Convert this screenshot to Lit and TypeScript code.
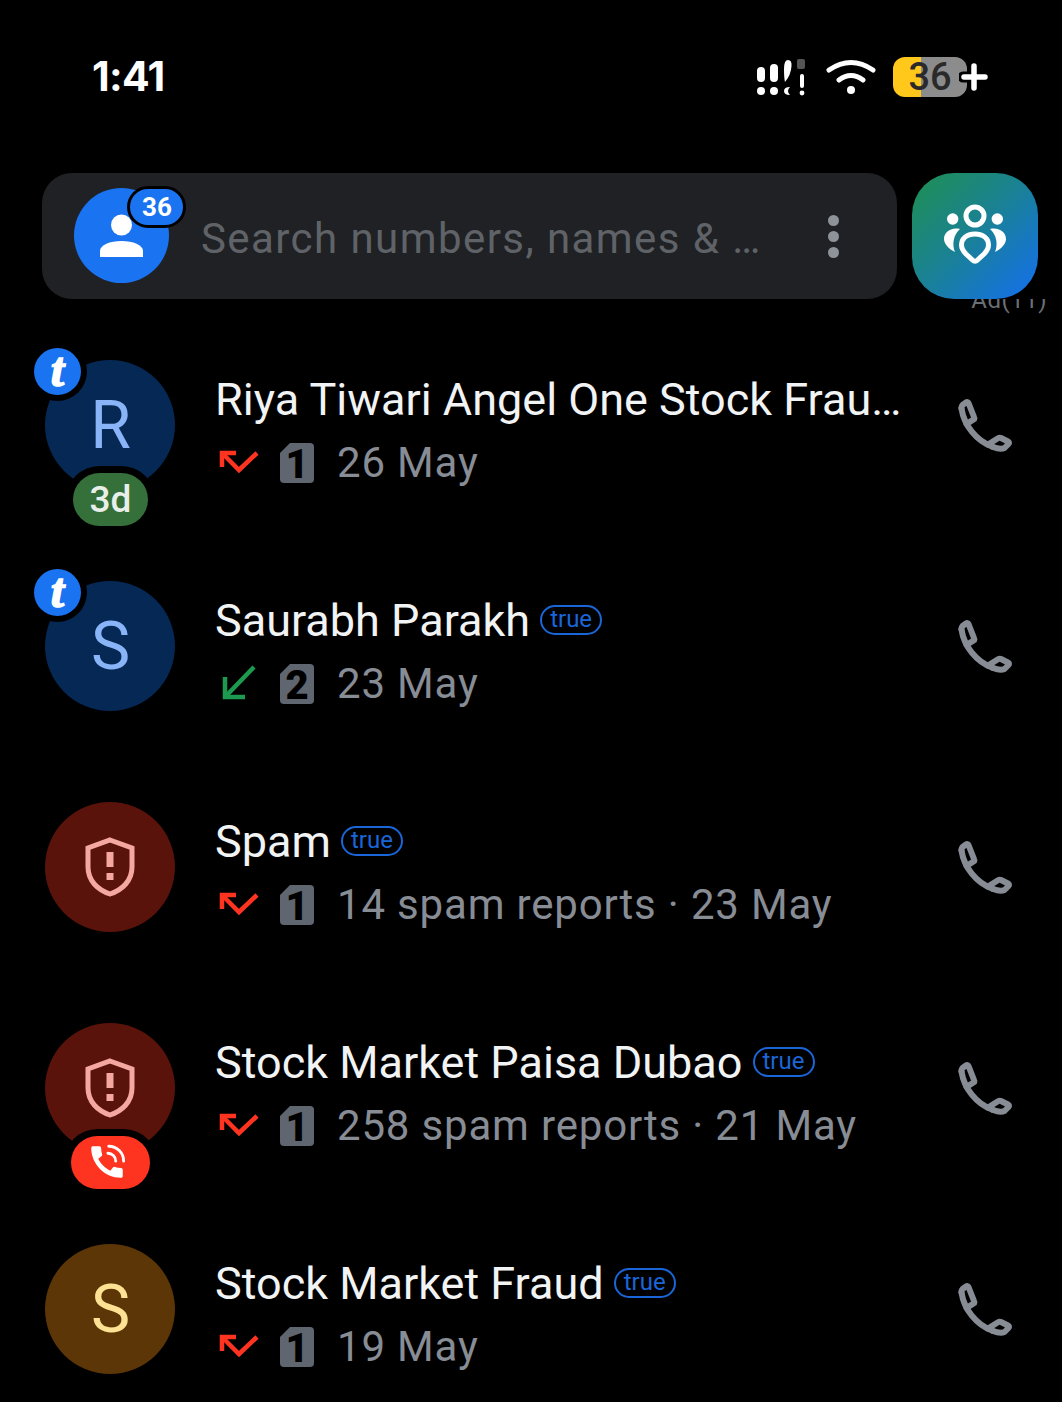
import { LitElement, html, css, svg, nothing } from "lit";
import { customElement } from "lit/decorators.js";

type Call = "missed" | "received";
interface Row {
  name: string;
  sub: string;
  call: Call;
  sim: number;
  tone: "blue" | "spam" | "brown";
  letter?: string;
  brand?: boolean;
  tag?: boolean;
  age?: string;
  live?: boolean;
}

const ROWS: Row[] = [
  { name: "Riya Tiwari Angel One Stock Frau…", sub: "26 May", call: "missed", sim: 1, tone: "blue", letter: "R", brand: true, age: "3d" },
  { name: "Saurabh Parakh", sub: "23 May", call: "received", sim: 2, tone: "blue", letter: "S", brand: true, tag: true },
  { name: "Spam", sub: "14 spam reports · 23 May", call: "missed", sim: 1, tone: "spam", tag: true },
  { name: "Stock Market Paisa Dubao", sub: "258 spam reports · 21 May", call: "missed", sim: 1, tone: "spam", tag: true, live: true },
  { name: "Stock Market Fraud", sub: "19 May", call: "missed", sim: 1, tone: "brown", letter: "S", tag: true },
];

// handle, then the two ear pieces that sit on it
const phoneIcon = svg`
  <path d="M3.5 9.5 C6 26 18 42 35 48" />
  <path d="M3.5 9.5 C3.3 8 3.5 7 4.5 6 L8 3.5 C9 2.8 10 3 10.5 4 L16 18 C16.5 19 16.3 20 15.5 20.5 L8.5 25" />
  <path d="M35 48 C39 49.5 44 50 46.5 49 L50.5 45 C51.5 44 51 43 50 42.5 L43 39 C42 38.5 41 38.7 40 39.3 L30 45.5" />
`;

@customElement("app-root")
export class AppRoot extends LitElement {
  static styles = css`
    :host {
      display: block;
      width: 1062px;
      height: 1402px;
      overflow: hidden;
      background: #000;
      font-family: Roboto, "Liberation Sans", sans-serif;
    }

    /* Status bar */
    .status {
      height: 154px;
      display: flex;
      align-items: center;
      justify-content: space-between;
      padding: 0 74px 0 92px;
      box-sizing: border-box;
    }
    .clock {
      font-family: Inter, Roboto, sans-serif;
      font-size: 41px;
      font-weight: 700;
      color: #fff;
      letter-spacing: -0.7px;
      margin-bottom: 2px;
    }
    .status-icons {
      display: flex;
      align-items: center;
      gap: 17px;
    }
    .status-icons svg { display: block; }
    .signal { margin-right: 2px; }
    .battery {
      position: relative;
      width: 74px;
      height: 40px;
      border-radius: 12px;
      background: linear-gradient(90deg, #ffc81a 0 28px, #8c8c8c 28px);
      color: #2a2a2a;
      font-size: 38px;
      font-weight: 500;
      line-height: 40px;
      text-align: center;
      margin-right: 21px;
    }
    .battery svg {
      position: absolute;
      left: 66px;
      top: 3px;
    }

    /* Search */
    .top {
      position: relative;
      display: flex;
      gap: 15px;
      margin-top: 19px;
      padding: 0 24px 0 42px;
    }
    .search {
      flex: 1;
      height: 126px;
      display: flex;
      align-items: center;
      background: #202124;
      border-radius: 30px;
      padding-left: 32px;
      box-sizing: border-box;
    }
    .me {
      position: relative;
      width: 95px;
      height: 95px;
      margin-top: -2px;
      border-radius: 50%;
      background: #1a73f0;
      flex: none;
    }
    .me svg {
      position: absolute;
      left: 0;
      top: 0;
    }
    .count {
      position: absolute;
      left: 53px;
      top: -2px;
      width: 59px;
      height: 42px;
      box-sizing: border-box;
      border: 3px solid #000;
      border-radius: 21px;
      background: #1a73f0;
      color: #fff;
      font-size: 26px;
      font-weight: 700;
      line-height: 37px;
      text-align: center;
      padding-left: 1px;
    }
    .placeholder {
      margin-left: 32px;
      padding-top: 4px;
      flex: 1;
      font-size: 42px;
      letter-spacing: 1.43px;
      color: #5f6368;
      white-space: nowrap;
    }
    .dots {
      display: flex;
      flex-direction: column;
      gap: 5px;
      margin-right: 58px;
    }
    .dots i {
      width: 11px;
      height: 11px;
      border-radius: 50%;
      background: #8e9299;
    }
    .assistant {
      position: relative;
      z-index: 1;
      width: 126px;
      height: 126px;
      flex: none;
      border-radius: 42px;
      background: linear-gradient(135deg, #1f9050 0%, #1a8290 45%, #146ff0 100%);
      display: flex;
      align-items: center;
      justify-content: center;
    }
    /* the ad label sits clipped under the button, only its lower part shows */
    .ad {
      position: absolute;
      right: 15px;
      top: 126px;
      height: 18px;
      overflow: hidden;
      font-size: 24px;
      letter-spacing: 0.5px;
      color: #6a6f75;
    }
    .ad span {
      display: block;
      margin-top: -13px;
    }

    /* Call log */
    .list {
      margin-top: 15px;
    }
    .row {
      height: 221px;
      display: flex;
      align-items: center;
      padding: 0 48px 0 45px;
      box-sizing: border-box;
    }
    .avatar {
      position: relative;
      width: 130px;
      height: 130px;
      flex: none;
      box-sizing: border-box;
      padding: 1px 0 0 1px;
      border-radius: 50%;
      display: flex;
      align-items: center;
      justify-content: center;
      font-size: 66px;
      font-weight: 400;
    }
    .avatar.blue { background: #052855; color: #8ab4f8; }
    .avatar.spam { background: #5a130b; padding: 0; }
    .avatar.brown { background: #5c3606; color: #fde293; }
    .brand {
      position: absolute;
      left: -11px;
      top: -12px;
      width: 47px;
      height: 47px;
      border-radius: 50%;
      background: #1a73f0;
      box-shadow: 0 0 0 6px #000;
      color: #fff;
      font-family: "Liberation Serif", serif;
      font-style: italic;
      font-weight: 700;
      font-size: 48px;
      line-height: 44px;
      text-align: center;
      -webkit-text-stroke: 1.5px #fff;
    }
    .pill {
      position: absolute;
      top: 113px;
      height: 53px;
      border-radius: 27px;
      box-shadow: 0 0 0 7px #000;
      display: flex;
      align-items: center;
      justify-content: center;
    }
    .age {
      left: 28px;
      width: 75px;
      background: #35703a;
      color: #e8efe8;
      font-size: 37px;
      font-weight: 500;
    }
    .live {
      left: 26px;
      width: 79px;
      background: #ff3420;
    }
    .live svg { margin-right: 8px; }
    .info {
      flex: 1;
      min-width: 0;
      margin-left: 40px;
      padding-top: 13px;
      display: flex;
      flex-direction: column;
      gap: 9px;
    }
    .title {
      display: flex;
      align-items: center;
      height: 54px;
      min-width: 0;
      gap: 10px;
    }
    .name {
      font-size: 45px;
      color: #f1f3f4;
      white-space: nowrap;
    }
    .tag {
      flex: none;
      box-sizing: border-box;
      width: 62px;
      height: 30px;
      margin-top: -2px;
      border: 2px solid #1a66d8;
      border-radius: 15px;
      color: #1a66d8;
      font-size: 24px;
      line-height: 25px;
      text-align: center;
    }
    .detail {
      display: flex;
      align-items: center;
      height: 54px;
      padding-left: 4px;
    }
    .detail svg { display: block; flex: none; }
    .sim {
      margin-left: 21px;
      overflow: visible;
    }
    .sub {
      margin-left: 23px;
      font-size: 42px;
      letter-spacing: 0.82px;
      color: #878c95;
      white-space: nowrap;
    }
    .dial {
      flex: none;
      display: block;
      margin-top: 4px;
      fill: none;
      stroke: #878c95;
      stroke-width: 6;
      stroke-linejoin: round;
      stroke-linecap: round;
    }
  `;

  private renderCallIcon(kind: Call) {
    if (kind === "received") {
      return html`<svg width="40" height="38" viewBox="0 0 40 38" fill="none" stroke="#1c9b50" stroke-width="4.5">
        <path d="M35 2 L6 32" /><path d="M6 12 V32 H26" />
      </svg>`;
    }
    return html`<svg width="40" height="38" viewBox="0 0 40 38" fill="none" stroke="#ff3420" stroke-width="4.5">
      <path d="M17 9 H3 V23" /><path d="M3 9 L20 26 L38 9" />
    </svg>`;
  }

  private renderSim(n: number) {
    return html`<svg class="sim" width="34" height="40" viewBox="0 0 34 40">
      <path d="M10 0 H30 Q34 0 34 4 V36 Q34 40 30 40 H4 Q0 40 0 36 V10 Z" fill="#5f6670" />
      <text x="17" y="35" text-anchor="middle" font-family="Roboto" font-weight="900" font-size="40" fill="#000">${n}</text>
    </svg>`;
  }

  private renderShield() {
    return html`<svg width="50" height="60" viewBox="0 0 50 60" fill="none">
      <path d="M25 3 L47 11 V30 C47 44 37 53 25 57 C13 53 3 44 3 30 V11 Z" stroke="#f4a8a0" stroke-width="5" />
      <rect x="21.5" y="15" width="7" height="15" fill="#f4a8a0" />
      <rect x="21.5" y="36" width="7" height="7" fill="#f4a8a0" />
    </svg>`;
  }

  private renderRow(r: Row) {
    return html`
      <div class="row">
        <div class="avatar ${r.tone}">
          ${r.letter ?? this.renderShield()}
          ${r.brand ? html`<span class="brand">t</span>` : nothing}
          ${r.age ? html`<span class="pill age">${r.age}</span>` : nothing}
          ${r.live
            ? html`<span class="pill live">
                <svg width="42" height="42" viewBox="0 0 24 24" fill="#fff">
                  <path d="M20.01 15.38c-1.23 0-2.42-.2-3.53-.56-.35-.12-.74-.03-1.01.24l-1.57 1.97c-2.83-1.35-5.48-3.9-6.89-6.83l1.95-1.66c.27-.28.35-.67.24-1.02-.37-1.11-.56-2.3-.56-3.53 0-.54-.45-.99-.99-.99H4.19C3.65 3 3 3.24 3 3.99 3 13.28 10.73 21 20.01 21c.71 0 .99-.63.99-1.18v-3.45c0-.54-.45-.99-.99-.99z" />
                  <path d="M13 3a8.5 8.5 0 0 1 8.5 8.5M12.5 7a4.5 4.5 0 0 1 4.5 4.5" fill="none" stroke="#fff" stroke-width="1.6" stroke-linecap="round" />
                </svg>
              </span>`
            : nothing}
        </div>
        <div class="info">
          <div class="title">
            <span class="name">${r.name}</span>
            ${r.tag ? html`<span class="tag">true</span>` : nothing}
          </div>
          <div class="detail">
            ${this.renderCallIcon(r.call)} ${this.renderSim(r.sim)}
            <span class="sub">${r.sub}</span>
          </div>
        </div>
        <svg class="dial" width="56" height="56" viewBox="0 0 56 56">${phoneIcon}</svg>
      </div>
    `;
  }

  render() {
    return html`
      <div class="status">
        <span class="clock">1:41</span>
        <div class="status-icons">
          <svg class="signal" width="50" height="38" viewBox="0 0 50 38">
            <g fill="#fff">
              <rect x="0" y="9" width="8" height="15" rx="4" />
              <rect x="13" y="6" width="8" height="18" rx="4" />
              <path d="M27 11 Q27 2 31 2 Q35 2 34.5 8 Q34 17 28 24 Q27 20 27 11Z" />
              <circle cx="4" cy="33" r="4" /><circle cx="17" cy="33" r="4" />
              <path d="M33 29 Q29 33 33 37 Q27 37 27 33 Q27 29 33 29Z" />
              <rect x="43" y="16" width="4" height="14" rx="2" />
              <circle cx="45" cy="35" r="2.4" />
            </g>
            <rect x="40" y="1" width="8" height="10" rx="2" fill="#555" />
          </svg>
          <svg width="50" height="36" viewBox="0 0 50 36" fill="none" stroke="#fff" stroke-width="5" stroke-linecap="round">
            <path d="M3 11 Q25 -4 47 11" /><path d="M13 21 Q25 12 37 21" />
            <circle cx="25" cy="31" r="4" fill="#fff" stroke="none" />
          </svg>
          <div class="battery">
            36
            <svg width="30" height="34" viewBox="0 0 30 34">
              <path d="M4 17 H26 M15 6 V28" stroke="#000" stroke-width="11" stroke-linecap="round" />
              <path d="M5 17 H26 M15 6 V28" stroke="#fff" stroke-width="5.5" stroke-linecap="round" />
            </svg>
          </div>
        </div>
      </div>

      <div class="top">
        <div class="search">
          <div class="me">
            <svg width="95" height="95" viewBox="0 0 95 95" fill="#fff">
              <circle cx="47.5" cy="37" r="10.5" />
              <path d="M26 69 V63 C26 57 36 53 47.5 53 C59 53 69 57 69 63 V69 Z" />
            </svg>
            <span class="count">36</span>
          </div>
          <span class="placeholder">Search numbers, names &amp; …</span>
          <div class="dots"><i></i><i></i><i></i></div>
        </div>
        <div class="assistant">
          <svg width="70" height="70" viewBox="0 0 70 70" fill="#fff">
            <circle cx="35" cy="15" r="9" fill="none" stroke="#fff" stroke-width="5" />
            <circle cx="12.7" cy="18" r="5.7" /><circle cx="57.3" cy="18" r="5.7" />
            <path d="M20 28 C10 26 4 32 4 38 C4 43 9 48 15 51 C12 44 13 34 20 28Z" />
            <path d="M50 28 C60 26 66 32 66 38 C66 43 61 48 55 51 C58 44 57 34 50 28Z" />
            <path d="M35 33 C26 33 21.5 38 21.5 44 C21.5 48 23 50 26 53 L33 59.5 C34 60.5 36 60.5 37 59.5 L44 53 C47 50 48.5 48 48.5 44 C48.5 38 44 33 35 33Z" fill="none" stroke="#fff" stroke-width="5" />
          </svg>
        </div>
        <div class="ad"><span>Ad(11)</span></div>
      </div>

      <div class="list">${ROWS.map((r) => this.renderRow(r))}</div>
    `;
  }
}

declare global {
  interface HTMLElementTagNameMap {
    "app-root": AppRoot;
  }
}
